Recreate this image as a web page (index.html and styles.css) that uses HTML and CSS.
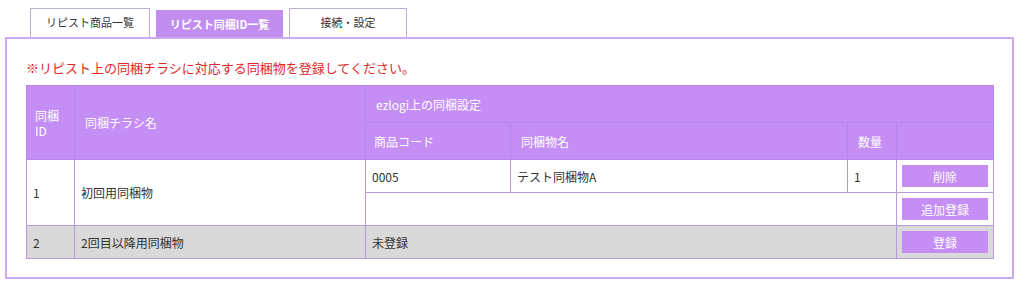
FILE: index.html
```html
<!DOCTYPE html>
<html lang="ja">
<head>
    <meta charset="UTF-8">
    <meta name="viewport" content="width=device-width, initial-scale=1.0">
    <title>リピスト同梱ID一覧</title>
    <link rel="stylesheet" href="styles.css">
</head>
<body>
<nav class="tabs">
    <a href="#" class="tab">リピスト商品一覧</a>
    <a href="#" class="tab active">リピスト同梱ID一覧</a>
    <a href="#" class="tab">接続・設定</a>
</nav>
<div class="panel">
    <p class="notice">※リピスト上の同梱チラシに対応する同梱物を登録してください。</p>
    <table class="bundle">
        <colgroup>
            <col class="c-id">
            <col class="c-name">
            <col class="c-code">
            <col class="c-item">
            <col class="c-qty">
            <col class="c-btn">
        </colgroup>
        <thead>
            <tr>
                <th rowspan="2">同梱<br>ID</th>
                <th rowspan="2">同梱チラシ名</th>
                <th colspan="4">ezlogi上の同梱設定</th>
            </tr>
            <tr>
                <th>商品コード</th>
                <th>同梱物名</th>
                <th>数量</th>
                <th></th>
            </tr>
        </thead>
        <tbody>
            <tr>
                <td rowspan="2">1</td>
                <td rowspan="2">初回用同梱物</td>
                <td>0005</td>
                <td>テスト同梱物A</td>
                <td>1</td>
                <td class="btn-cell"><button class="btn">削除</button></td>
            </tr>
            <tr>
                <td colspan="3"></td>
                <td class="btn-cell"><button class="btn">追加登録</button></td>
            </tr>
            <tr class="empty">
                <td>2</td>
                <td>2回目以降用同梱物</td>
                <td colspan="3">未登録</td>
                <td class="btn-cell"><button class="btn">登録</button></td>
            </tr>
        </tbody>
    </table>
</div>
</body>
</html>
```

FILE: styles.css
```css
body {
    margin: 0;
    font-family: "Noto Sans CJK JP", "Noto Sans", sans-serif;
    font-size: 12px;
    color: #333;
    background: #fff;
}
.tabs {
    display: flex;
    align-items: flex-end;
    gap: 6px;
    padding: 8px 0 0 30px;
    height: 29px;
}
.tab {
    display: block;
    box-sizing: border-box;
    width: 120px;
    height: 29px;
    line-height: 27px;
    border: 1px solid #bfaed6;
    border-bottom: none;
    text-align: center;
    text-decoration: none;
    color: #333;
    font-size: 11px;
}
.tab.active {
    width: 127px;
    height: 27px;
    line-height: 27px;
    background-color: #c18ef0;
    border-color: #c18ef0;
    color: #fff;
    font-weight: bold;
}
.tab:last-child {
    width: 118px;
}
.panel {
    box-sizing: border-box;
    width: 1009px;
    height: 242px;
    margin-left: 5px;
    border: 2px solid #cba9ec;
    padding: 0 19px;
}
.notice {
    margin: 20px 0 8px 0;
    color: #e0282a;
    font-size: 13px;
    line-height: 18px;
}
.bundle {
    width: 967px;
    border-collapse: collapse;
    table-layout: fixed;
}
.c-id { width: 48px; }
.c-name { width: 291px; }
.c-code { width: 145px; }
.c-item { width: 337px; }
.c-qty { width: 49px; }
.c-btn { width: 97px; }
.bundle th {
    background-color: #c48ef4;
    color: #fff;
    font-weight: normal;
    text-align: left;
    padding: 0 10px;
    height: 36px;
    border: 1px solid #b884e6;
    line-height: 15px;
}
.bundle th:first-child {
    padding-left: 8px;
}
.bundle td {
    border: 1px solid #b99bdc;
    padding: 0 6px;
    height: 32px;
}
.bundle tr.empty td {
    background-color: #d9d9d9;
}
.bundle td.btn-cell {
    padding: 0 5px;
}
.btn {
    display: block;
    width: 86px;
    height: 22px;
    border: none;
    background-color: #c48ef4;
    color: #fff;
    font-family: inherit;
    font-size: 12px;
    padding: 0;
    cursor: pointer;
}
```
